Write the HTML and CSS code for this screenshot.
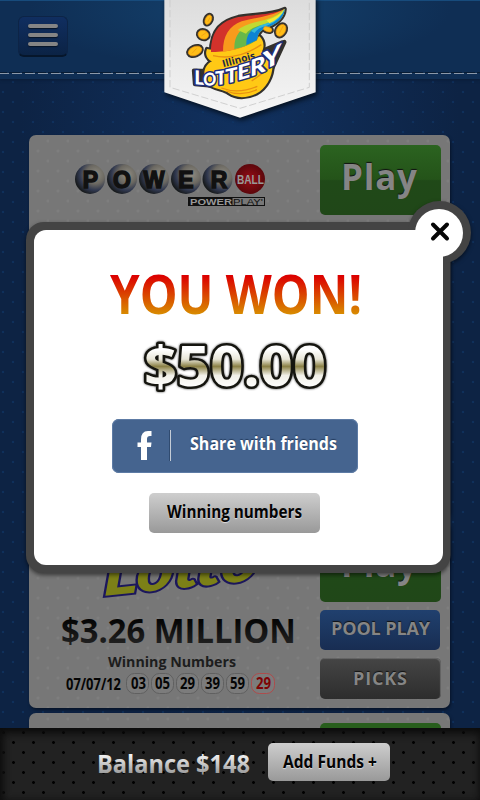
FILE: index.html
```html
<!DOCTYPE html>
<html lang="en">
<head>
<meta charset="utf-8">
<title>Illinois Lottery</title>
<link rel="stylesheet" href="styles.css">
</head>
<body>
<div class="app">
  <header class="header">
    <button class="menu" aria-label="Menu"><i></i><i></i><i></i></button>
    <svg class="stitch" width="480" height="4"><path d="M-4 .5H480" stroke="#081c33" stroke-dasharray="11 2"/><path d="M-1 1.5H480" stroke="#8b98a9" stroke-dasharray="10 3"/></svg>
  </header>

  <svg class="banner" width="170" height="130" viewBox="0 0 510 390">
    <defs><linearGradient id="paper" x2="0" y2="1"><stop stop-color="#dcdcdc"/><stop offset="1" stop-color="#f6f6f6"/></linearGradient></defs>
    <path class="banner-shape" d="M28-10H482V277L255 353 28 277Z" fill="url(#paper)"/>
    <path d="M45 0V262L255 325 463 262V0" fill="none" stroke="#c9c9c9" stroke-width="2.5" stroke-dasharray="22 8"/>
    <g class="logo-art" stroke-linejoin="round">
      <g stroke="#33312d" stroke-width="13" fill="#33312d">
        <path d="M168 158C168 88 202 62 250 51C305 42 345 46 389 27C387 62 352 78 328 86C312 94 309 104 306 120Z"/>
        <path d="M156 147C149 163 157 177 171 184C140 200 143 235 165 257C190 270 208 268 222 280C243 295 275 295 303 281C335 266 356 224 352 188L321 154C330 138 325 117 312 108C293 142 205 158 156 147Z"/>
        <ellipse cx="160" cy="59" rx="9" ry="15" transform="rotate(25 160 59)"/><ellipse cx="145" cy="104" rx="16" ry="13" transform="rotate(18 145 104)"/><ellipse cx="120" cy="153" rx="21" ry="13" transform="rotate(-23 120 153)"/><ellipse cx="378" cy="91" rx="13" ry="19" transform="rotate(30 378 91)"/><ellipse cx="338" cy="88" rx="13" ry="7" transform="rotate(18 338 88)"/>
        <path d="M117 212L178 214 380 128 388 126 352 204 300 226 186 258 120 252Z"/>
      </g>
      <path d="M156 147C149 163 157 177 171 184C140 200 143 235 165 257C190 270 208 268 222 280C243 295 275 295 303 281C335 266 356 224 352 188L321 154C330 138 325 117 312 108C293 142 205 158 156 147Z" fill="#ffc915"/>
      <path d="M168 156C168 88 202 62 250 51C305 42 345 46 389 27C387 62 352 78 328 86C312 94 309 104 306 120Q240 160 168 156Z" fill="#d2322b"/>
      <path d="M204 155C204 107 222 79 260 64C305 51 345 51 389 27C387 62 352 78 328 86C312 94 309 104 306 120Q260 150 204 155Z" fill="#f89b1c"/>
      <path d="M238 147C237 105 257 84 289 74C327 66 356 54 389 27C387 62 352 78 328 86C312 94 309 104 306 120Q275 140 238 147Z" fill="#67b84a"/>
      <path d="M248 90Q268 75 300 67Q355 58 389 27Q371 61 332 73Q290 79 273 101Z" fill="#c3d932"/>
      <path d="M274 135C273 105 286 88 311 80C343 70 369 58 389 27C387 62 352 78 328 86C312 94 309 104 306 120Z" fill="#0c83d5"/>
      <path d="M288 93Q306 77 337 69Q372 53 389 27Q379 61 335 77Q308 83 299 99Z" fill="#35b9d8"/>
      <path d="M335 61Q371 50 389 27Q377 55 343 70Z" fill="#f2e931"/>
      <path d="M174 167Q246 183 319 134M199 264Q249 283 307 259M213 273Q260 291 306 269M290 243L340 207" fill="none" stroke="#e99112" stroke-width="4"/>
      <g fill="#ffbd16" stroke="#ee9712" stroke-width="2"><ellipse cx="160" cy="59" rx="9" ry="15" transform="rotate(25 160 59)"/><ellipse cx="145" cy="104" rx="16" ry="13" transform="rotate(18 145 104)"/><ellipse cx="120" cy="153" rx="21" ry="13" transform="rotate(-23 120 153)"/><ellipse cx="378" cy="91" rx="13" ry="19" transform="rotate(30 378 91)"/><ellipse cx="338" cy="88" rx="13" ry="7" transform="rotate(18 338 88)"/><path d="M111 160L125 145M139 108L156 96M158 66L165 53M373 100L385 77"/></g>
      <text class="illinois" x="205" y="202" textLength="101" lengthAdjust="spacingAndGlyphs" transform="rotate(-15 205 202)">Illinois</text>
      <g class="lottery">
        <text transform="translate(118 253) skewY(4)" font-size="58" textLength="31" lengthAdjust="spacingAndGlyphs">L</text>
        <text transform="translate(145 257) skewY(-2)" font-size="53" textLength="39" lengthAdjust="spacingAndGlyphs">O</text>
        <text transform="translate(180 256) skewY(-7)" font-size="57" textLength="36" lengthAdjust="spacingAndGlyphs">T</text>
        <text transform="translate(211 251) skewY(-12)" font-size="59" textLength="38" lengthAdjust="spacingAndGlyphs">T</text>
        <text transform="translate(247 242) skewY(-16)" font-size="62" textLength="39" lengthAdjust="spacingAndGlyphs">E</text>
        <text transform="translate(285 231) skewY(-21)" font-size="68" textLength="47" lengthAdjust="spacingAndGlyphs">R</text>
        <text transform="translate(323 213) skewY(-28)" font-size="75" textLength="56" lengthAdjust="spacingAndGlyphs">Y</text>
      </g>
    </g>
  </svg>

  <main class="list">
    <section class="card card-tall">
      <div class="info">
        <svg width="291" height="85" viewBox="29 135 291 85">
          <defs><radialGradient id="ball" cx=".68" cy=".35" r=".7"><stop stop-color="#8f8c82"/><stop offset=".45" stop-color="#6b6861"/><stop offset=".75" stop-color="#30384f"/><stop offset="1" stop-color="#181b1d"/></radialGradient><radialGradient id="redball"><stop stop-color="#970c15"/><stop offset="1" stop-color="#5c070c"/></radialGradient></defs>
          <g fill="url(#ball)"><circle cx="90" cy="179" r="15"/><circle cx="122" cy="179" r="15"/><circle cx="154" cy="179" r="15"/><circle cx="186" cy="179" r="15"/><circle cx="217.500" cy="179" r="15"/></g><circle cx="250" cy="179" r="15" fill="url(#redball)"/>
          <g class="ball-letters"><text x="90.500" y="187.500">P</text><text x="122" y="187.500">O</text><text x="154" y="187.500" textLength="21" lengthAdjust="spacingAndGlyphs">W</text><text x="186" y="187.500">E</text><text x="219" y="187.500">R</text></g>
          <text class="ball-word" x="237" y="184" textLength="27" lengthAdjust="spacingAndGlyphs">BALL</text>
          <path d="M188 197H265V206H188Z" fill="#101010"/><path d="M232.500 198H264V205H232.500Z" fill="#777"/>
          <text class="pp pp-light" x="190" y="205" textLength="42" lengthAdjust="spacingAndGlyphs">POWER</text><text class="pp pp-thin" x="233" y="205" textLength="30" lengthAdjust="spacingAndGlyphs">PLAY'</text>
        </svg>
      </div>
      <div class="actions"><button class="btn play"><svg width="121" height="70"><text x="21" y="45" textLength="76">Play</text></svg></button></div>
    </section>

    <section class="card">
      <div class="info">
        <svg width="291" height="186" viewBox="29 522 291 186">
          <defs><linearGradient id="ink" x2="0" y2="1"><stop offset=".3" stop-color="#050505"/><stop offset="1" stop-color="#2b2b2b"/></linearGradient></defs>
          <text class="lotto" transform="translate(103 596) rotate(-6) skewX(-8)" textLength="156" lengthAdjust="spacingAndGlyphs">Lotto</text>
          <text class="jackpot" x="61" y="643" textLength="235" lengthAdjust="spacingAndGlyphs">$3.26 MILLION</text>
          <text class="caption" x="108" y="667" textLength="128" lengthAdjust="spacingAndGlyphs">Winning Numbers</text>
          <text class="date" x="66" y="690" textLength="55" lengthAdjust="spacingAndGlyphs">07/07/12</text>
          <g class="pills"><rect x="126.500" y="673.500" width="22" height="20" rx="8"/><rect x="151.500" y="673.500" width="22" height="20" rx="8"/><rect x="176.500" y="673.500" width="22" height="20" rx="8"/><rect x="201.500" y="673.500" width="22" height="20" rx="8"/><rect x="226.500" y="673.500" width="22" height="20" rx="8"/><rect class="hot" x="251.500" y="673.500" width="23" height="20" rx="8"/></g>
          <g class="date"><text x="131" y="689" textLength="15" lengthAdjust="spacingAndGlyphs">03</text><text x="155" y="689" textLength="15" lengthAdjust="spacingAndGlyphs">05</text><text x="180" y="689" textLength="15" lengthAdjust="spacingAndGlyphs">29</text><text x="205" y="689" textLength="15" lengthAdjust="spacingAndGlyphs">39</text><text x="230" y="689" textLength="15" lengthAdjust="spacingAndGlyphs">59</text><text class="hot-number" x="256" y="689" textLength="15" lengthAdjust="spacingAndGlyphs">29</text></g>
        </svg>
      </div>
      <div class="actions">
        <button class="btn play"><svg width="121" height="70"><text x="21" y="45" textLength="76">Play</text></svg></button>
        <button class="btn pool"><svg width="120" height="40"><text x="11" y="25" textLength="99">POOL PLAY</text></svg></button>
        <button class="btn picks"><svg width="121" height="41"><text x="33" y="27" textLength="54">PICKS</text></svg></button>
      </div>
    </section>

    <section class="card"><div class="info"></div><div class="actions"><button class="btn play next"></button></div></section>
  </main>

  <footer class="footer">
    <svg width="156" height="40"><defs><linearGradient id="silver" x2="0" y2="1"><stop offset=".25" stop-color="#f5f5f5"/><stop offset=".85" stop-color="#999"/></linearGradient></defs><text class="balance" x="0" y="29.500" textLength="153" lengthAdjust="spacingAndGlyphs">Balance $148</text></svg>
    <button class="grey-btn add"><svg width="122" height="38"><text x="15" y="25" textLength="94" lengthAdjust="spacingAndGlyphs">Add Funds +</text></svg></button>
  </footer>

  <div class="modal" role="dialog">
    <svg class="modal-frame" width="460" height="390">
      <g class="frame-edge"><rect x="6" y="22" width="424.500" height="351" rx="18"/><circle cx="419.500" cy="32.500" r="31.500"/></g>
      <rect x="14" y="30" width="409" height="335" rx="12" fill="#fff"/><circle cx="419" cy="33" r="24" fill="#fff"/>
      <path d="M413 24.500L427 38.500M427 24.500L413 38.500" stroke="#050505" stroke-width="4" stroke-linecap="round"/>
    </svg>
    <div class="modal-content">
      <svg class="prize" width="280" height="140" viewBox="90 260 280 140">
        <defs><linearGradient id="fire" gradientUnits="userSpaceOnUse" x1="0" y1="276" x2="0" y2="314"><stop stop-color="#dc0000"/><stop offset="1" stop-color="#d88b00"/></linearGradient><linearGradient id="gold" gradientUnits="userSpaceOnUse" x1="0" y1="343" x2="0" y2="388"><stop offset=".15" stop-color="#fff"/><stop offset=".36" stop-color="#e8e6d8"/><stop offset=".52" stop-color="#8b8146"/><stop offset=".72" stop-color="#f1f0e8"/><stop offset="1" stop-color="#fff"/></linearGradient></defs>
        <text class="won" x="110" y="314" textLength="252" lengthAdjust="spacingAndGlyphs">YOU WON!</text>
        <text class="amount" x="144" y="386" textLength="182" lengthAdjust="spacingAndGlyphs">$50.00</text>
      </svg>
      <button class="share"><svg width="246" height="54"><path d="M29 41V28H25.500V23.500H29V20.500Q29 12 36 12H39.500V17H38Q35 17 35 20V23.500H39.500L39 28H35V41Z" fill="#fff"/><path d="M58.500 11V42" stroke="#c4ccd6"/><path d="M57.500 11V42" stroke="#304b70"/><text x="78" y="31" textLength="147" lengthAdjust="spacingAndGlyphs">Share with friends</text></svg></button>
      <button class="grey-btn winning"><svg width="171" height="40"><text x="18" y="25" textLength="135" lengthAdjust="spacingAndGlyphs">Winning numbers</text></svg></button>
    </div>
  </div>
</div>
</body>
</html>
```

FILE: styles.css
```css
* { box-sizing: border-box; }
body { margin: 0; font-family: "Open Sans", "Noto Sans", sans-serif; }
button { padding: 0; border: 0; display: block; font: inherit; }
svg { display: block; }
.app {
  position: relative; width: 480px; height: 800px; overflow: hidden;
  display: flex; flex-direction: column;
  background:
    radial-gradient(circle at 13px 2px, #10396b99 1px, transparent 1.6px) 0 0 / 20px 20px,
    radial-gradient(circle at 3px 12px, #10396b99 1px, transparent 1.6px) 0 0 / 20px 20px,
    radial-gradient(ellipse at 50% 20%, #11315f, #0d2344 65%);
}
.header {
  flex: 0 0 79px; padding: 15px 0 0 18px;
  background: radial-gradient(ellipse at 50% 10%, #14426e, #0f2e54 62%);
  border-top: 1px solid #174b7c; box-shadow: 0 1px 3px #0a1c35;
}
.menu {
  width: 50px; height: 41px; padding: 7px 10px 0 9px; border-radius: 6px;
  background: linear-gradient(#102e60, #0b2345);
  border: 1px solid #0d2446; border-bottom: 2px solid #06162b;
  display: flex; flex-direction: column; gap: 5px;
}
.menu i { flex: 0 0 4px; width: 30px; border-radius: 2px; background: #858585; box-shadow: 0 1px 1px #071426; }
.stitch { margin: 15px 0 0 -18px; }
.banner { position: absolute; left: 155px; top: 0; overflow: visible; }
.banner-shape { filter: drop-shadow(5px 8px 8px #04101f); }
.illinois { font: 700 30px "Open Sans", sans-serif; fill: #222a45; }
.lottery { font-family: "Lato", sans-serif; font-weight: 900; fill: #fff; stroke: #202d79; stroke-width: 9px; paint-order: stroke; }
.list { flex: 1; min-height: 0; overflow: hidden; padding: 56px 30px 0 29px; display: flex; flex-direction: column; gap: 5px; }
.card {
  flex: 0 0 186px; display: flex; border-radius: 7px; overflow: hidden;
  background:
    radial-gradient(circle at 19px 6px, #7e7e7e 1px, transparent 2px) 0 0 / 20px 20px,
    radial-gradient(circle at 9px 16px, #7e7e7e 1px, transparent 2px) 0 0 / 20px 20px, #777;
  box-shadow: 1px 2px 3px #071429;
}
.card-tall { flex-basis: 382px; }
.info { width: 291px; }
.actions { width: 121px; padding-top: 10px; display: flex; flex-direction: column; gap: 8px; }
.btn { border-radius: 5px; overflow: hidden; }
.btn text { font-weight: 700; fill: #858585; text-shadow: 0 -1px 1px #111; }
.play { flex: 0 0 70px; width: 121px; background: linear-gradient(#2b6320, #245319 49%, #204918 51%, #204718); }
.play text { font-size: 35px; }
.pool { flex: 0 0 40px; width: 120px; background: linear-gradient(#20406e, #182d52); }
.pool text, .picks text { font-size: 18px; }
.picks { flex: 0 0 41px; background: linear-gradient(#454545, #2d2d2d); box-shadow: inset -1px 1px 1px #686868; }
.next { background: #285e1d; }
.ball-letters { font: 700 23px "Liberation Sans", sans-serif; text-anchor: middle; fill: #111; stroke: #111; stroke-width: 1.4px; }
.ball-word { font: 700 13.5px "Liberation Sans", sans-serif; fill: #999; }
.pp { font: 700 9px "Liberation Sans", sans-serif; }
.pp-light { fill: #999; }
.pp-thin { fill: #111; font-weight: 400; }
.lotto { font: italic 900 60px "Lato", sans-serif; fill: #7c8017; stroke: #1c175c; stroke-width: 4px; paint-order: stroke; }
.jackpot { font-size: 34.5px; font-weight: 700; fill: url(#ink); }
.caption { font-size: 15px; font-weight: 700; fill: #1d1d1d; }
.date { font-size: 16.5px; font-weight: 700; fill: #050505; }
.pills { fill: #7c7c7c; stroke: #606060; }
.pills .hot { stroke: #ad4c4c; }
.hot-number { fill: #7e0305; }
.footer {
  flex: 0 0 72px; padding: 15px 0 0 97px; display: flex; gap: 15px;
  background:
    radial-gradient(circle at 3.5px 4.500px, #000 1px, transparent 1.8px) 0 0 / 20px 20px,
    radial-gradient(circle at 13.5px 14.500px, #000 1px, transparent 1.8px) 0 0 / 20px 20px, #222;
  box-shadow: inset 0 5px 8px #0b0b0b, inset 4px 0 6px #161616;
}
.balance { font-size: 25px; font-weight: 700; fill: url(#silver); }
.grey-btn { border-radius: 5px; background: linear-gradient(#cecece, #999); }
.grey-btn text { font-size: 17px; font-weight: 700; fill: #050505; text-shadow: 0 1px 1px #ddd; }
.add { width: 122px; height: 38px; }
.modal { position: absolute; left: 20px; top: 200px; width: 460px; height: 390px; }
.modal-frame { position: absolute; left: 0; top: 0; overflow: visible; }
.frame-edge { fill: #444; filter: drop-shadow(0 2px 2px #0008); }
.modal-content { position: relative; padding: 60px 0 0 70px; }
.won { font-size: 53px; font-weight: 700; fill: url(#fire); }
.amount { font-size: 55px; font-weight: 700; fill: url(#gold); stroke: #15150f; stroke-width: 5px; paint-order: stroke; stroke-linejoin: round; filter: drop-shadow(0 0 1px #444); }
.share { margin: 19px 0 0 22px; width: 246px; height: 54px; border-radius: 7px; background: #45648f; box-shadow: inset 0 0 0 1px #5d7ba5; overflow: hidden; }
.share text { font-size: 17px; font-weight: 700; fill: #fff; text-shadow: 0 -1px 1px #243c5f; }
.winning { margin: 20px 0 0 59px; width: 171px; height: 40px; }
```
